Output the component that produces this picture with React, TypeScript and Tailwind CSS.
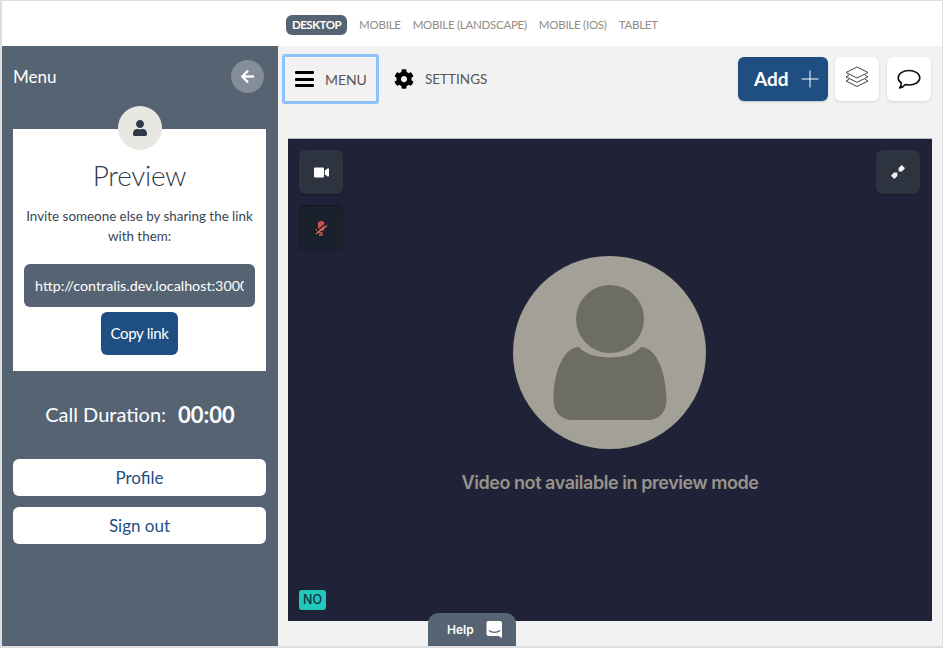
import React from "react";
import { FaVideo, FaCog, FaArrowLeft, FaUser } from "react-icons/fa";

function Layers() {
  return (
    <svg width="24" height="22" viewBox="0 0 24 22" fill="none" stroke="#444" strokeWidth="1" strokeLinejoin="round">
      <path d="M12 1 L23 6.5 L12 12 L1 6.5 Z" />
      <path d="M4 9 L1 10.8 L12 16.3 L23 10.8 L20 9" />
      <path d="M4 13.3 L1 15 L12 20.5 L23 15 L20 13.3" />
    </svg>
  );
}

function Chat() {
  return (
    <svg width="24" height="21" viewBox="0 0 24 21" fill="none" stroke="#111" strokeWidth="1.6" strokeLinejoin="round">
      <path d="M12 1.5 C18 1.5 22.8 4.6 22.8 8.8 C22.8 13 18 16 12 16 C10.6 16 9.4 15.8 8.2 15.5 C6.8 17.4 4.8 18.8 2.6 19 C3.8 17.6 4.4 15.8 4.3 14 C2.3 12.7 1.2 10.9 1.2 8.8 C1.2 4.6 6 1.5 12 1.5 Z" />
    </svg>
  );
}

function Person() {
  return (
    <svg width="114" height="136" viewBox="0 0 114 136" fill="#6d6c65">
      <circle cx="57" cy="34" r="34" />
      <path d="M26 62 C37 76 77 76 88 62 C102 62 113 84 113.500 115 C113.500 127 106 135 95 135 L19 135 C8 135 0.500 127 0.500 115 C0.500 84 12 62 26 62 Z" />
    </svg>
  );
}

function HelpIcon() {
  return (
    <svg width="17" height="19" viewBox="0 0 17 19">
      <path d="M2 1 H14 A2 2 0 0 1 16 3 V18 L12.500 16 H2 A2 2 0 0 1 0.500 14 V3 A2 2 0 0 1 2 1 Z" fill="#fff" />
      <path d="M3 10.500 C6 13 11 13 14 10.500" fill="none" stroke="#566373" strokeWidth="1.300" />
    </svg>
  );
}

function MutedMic() {
  return (
    <svg width="14" height="16" viewBox="0 0 14 16" fill="none">
      <rect x="4" y="1" width="6.500" height="10" rx="3.200" fill="#c9544f" />
      <path d="M2 9 C3 12 6 13 8 13 L8 15 L5 15" stroke="#c9544f" strokeWidth="1.300" />
      <path d="M1.500 12 L12.500 3" stroke="#1b212c" strokeWidth="1.200" />
      <path d="M2 14 L13 5.500" stroke="#d9635c" strokeWidth="1.300" />
    </svg>
  );
}

function Collapse() {
  return (
    <svg width="14" height="14" viewBox="0 0 14 14" fill="#f4f4f4">
      <path d="M7.600 6.400 L7.600 3 L10.800 0 L14 3.200 L11 6.400 Z" />
      <path d="M6.400 7.600 L6.400 11 L3.200 14 L0 10.800 L3 7.600 Z" />
    </svg>
  );
}

function VideoButton({ dark, children, className }: { dark?: boolean; children: React.ReactNode; className?: string }) {
  return (
    <div className={`w-[44px] h-[44px] rounded-[6px] flex items-center justify-center shadow-[0_1px_2px_rgba(0,0,0,0.3)] ${dark ? "bg-[#1b212c] border-t border-[#12151e]" : "bg-[#2e3340]"} ${className ?? ""}`}>
      {children}
    </div>
  );
}

export default function App() {
  return (
    <div className="w-[945px] h-[648px] bg-white overflow-hidden font-['Lato',sans-serif]">
      <div className="w-[943px] h-[648px] border-t border-l-2 border-r-[1px] border-b-2 border-[#dedede] flex flex-col">
        <nav className="h-[45px] shrink-0 bg-white flex items-center pl-[284px] text-[11.500px] text-[#8f8d84] tracking-[-0.25px]">
          <span className="bg-[#566373] text-white font-bold rounded-[6px] px-[6px] h-[20px] flex items-center mt-[2px] tracking-[-0.5px]">DESKTOP</span>
          <span className="ml-[12px] mt-[2px]">MOBILE</span>
          <span className="ml-[12px] mt-[2px]">MOBILE (LANDSCAPE)</span>
          <span className="ml-[12px] mt-[2px]">MOBILE (IOS)</span>
          <span className="ml-[12px] mt-[2px]">TABLET</span>
        </nav>
        <div className="flex-1 flex min-h-0">
          <aside className="w-[276px] shrink-0 bg-[#566373] px-[11px] flex flex-col">
            <div className="h-[60px] flex items-center justify-between pr-[3px] text-white text-[17px]">
              <span className="mt-[2px]">Menu</span>
              <span className="w-[33px] h-[33px] rounded-full bg-[#858d99] flex items-center justify-center">
                <FaArrowLeft size={15} color="#fff" />
              </span>
            </div>
            <div className="relative mt-[23px] w-[253px] h-[242px] bg-white flex flex-col items-center pt-[28px]">
              <div className="absolute left-[105px] top-[-23px] w-[44px] h-[44px] rounded-full bg-[#e9e7e1] flex items-center justify-center">
                <FaUser size={16} color="#2e3a48" />
              </div>
              <h1 className="text-[28px] leading-[36px] font-light text-[#2e3a48] tracking-[-0.3px]">Preview</h1>
              <p className="mt-[13px] text-[13.400px] leading-[20px] text-[#3a4553] text-center">
                Invite someone else by sharing the link<br />with them:
              </p>
              <input
                readOnly
                value="http://contralis.dev.localhost:3000/preview"
                className="mt-[18px] w-[231px] h-[43px] rounded-[6px] bg-[#566373] text-white text-[14.300px] px-[11px] outline-none"
              />
              <button className="mt-[5px] w-[77px] h-[43px] rounded-[6px] bg-[#1f4f82] text-white text-[15px] tracking-[-0.3px]">Copy link</button>
            </div>
            <div className="mt-[28px] h-[30px] flex items-center justify-center text-white text-[20px]">
              <span>Call Duration:</span>
              <span className="ml-[12px] font-bold text-[22px]">00:00</span>
            </div>
            <button className="mt-[30px] w-[253px] h-[37px] rounded-[6px] bg-white text-[#1f4f82] text-[17px]">Profile</button>
            <button className="mt-[11px] w-[253px] h-[37px] rounded-[6px] bg-white text-[#1f4f82] text-[17px]">Sign out</button>
          </aside>
          <main className="relative flex-1 bg-[#f2f2f2] flex flex-col min-w-0">
            <header className="h-[92px] shrink-0 flex items-start pl-[4px] pr-[11px] pt-[8px]">
              <div className="w-[97px] h-[50px] border-[3px] border-[#8dc1fb] rounded-[3px] flex items-center pl-[10px]">
                <div className="w-[19px] flex flex-col gap-[3.500px]">
                  <span className="h-[3px] bg-black rounded-[1px]" />
                  <span className="h-[3px] bg-black rounded-[1px]" />
                  <span className="h-[3px] bg-black rounded-[1px]" />
                </div>
                <span className="ml-[11px] text-[14px] text-[#555] tracking-[-0.1px]">MENU</span>
              </div>
              <div className="h-[50px] ml-[15px] flex items-center">
                <FaCog size={20} color="#000" />
                <span className="ml-[11px] text-[13.500px] text-[#555]">SETTINGS</span>
              </div>
              <div className="ml-auto mt-[3px] flex items-center">
                <button className="w-[90px] h-[44px] rounded-[6px] bg-[#1f4f82] text-white flex items-center pl-[16px] shadow-[0_1px_2px_rgba(0,0,0,0.2)]">
                  <span className="text-[19px] font-bold">Add</span>
                  <svg className="ml-[12px]" width="18" height="18" viewBox="0 0 18 18" stroke="#fff" strokeWidth="1">
                    <path d="M9 0.500 V17.500 M0.500 9 H17.500" />
                  </svg>
                </button>
                <div className="ml-[7px] w-[44px] h-[44px] rounded-[6px] bg-white flex items-start justify-center pt-[9px] shadow-[0_1px_3px_rgba(0,0,0,0.12)]">
                  <Layers />
                </div>
                <div className="ml-[8px] w-[44px] h-[44px] rounded-[6px] bg-white flex items-center justify-center shadow-[0_1px_3px_rgba(0,0,0,0.12)]">
                  <Chat />
                </div>
              </div>
            </header>
            <section className="relative ml-[10px] w-[644px] h-[483px] bg-[#202337] border-t border-[#b9bbc2]">
              <div className="absolute left-[11px] top-[11px] flex flex-col gap-[11px]">
                <VideoButton><FaVideo size={15} color="#fff" /></VideoButton>
                <VideoButton dark><MutedMic /></VideoButton>
              </div>
              <VideoButton className="absolute right-[12px] top-[11px]">
                <Collapse />
              </VideoButton>
              <div className="h-full flex flex-col items-center pt-[117px]">
                <div className="w-[193px] h-[193px] rounded-full bg-[#a3a097] flex justify-center pt-[29px] -ml-[1px]">
                  <Person />
                </div>
                <p className="mt-[21px] text-[18px] leading-[26px] font-semibold text-[#96948c] font-['Inter',sans-serif] tracking-[-0.45px]">Video not available in preview mode</p>
              </div>
              <span className="absolute left-[11px] bottom-[11px] w-[27px] h-[20px] rounded-[3px] bg-[#1fc8b8] text-[#10323f] text-[12.500px] font-medium flex items-center justify-center font-['Inter',sans-serif]">NO</span>
            </section>
            <div className="absolute left-[150px] bottom-0 w-[88px] h-[33px] rounded-t-[10px] bg-[#566373] flex items-center pl-[19px] text-white text-[12px] font-semibold font-['Inter',sans-serif]">
              <span>Help</span>
              <span className="ml-[12px] flex"><HelpIcon /></span>
            </div>
          </main>
        </div>
      </div>
    </div>
  );
}
